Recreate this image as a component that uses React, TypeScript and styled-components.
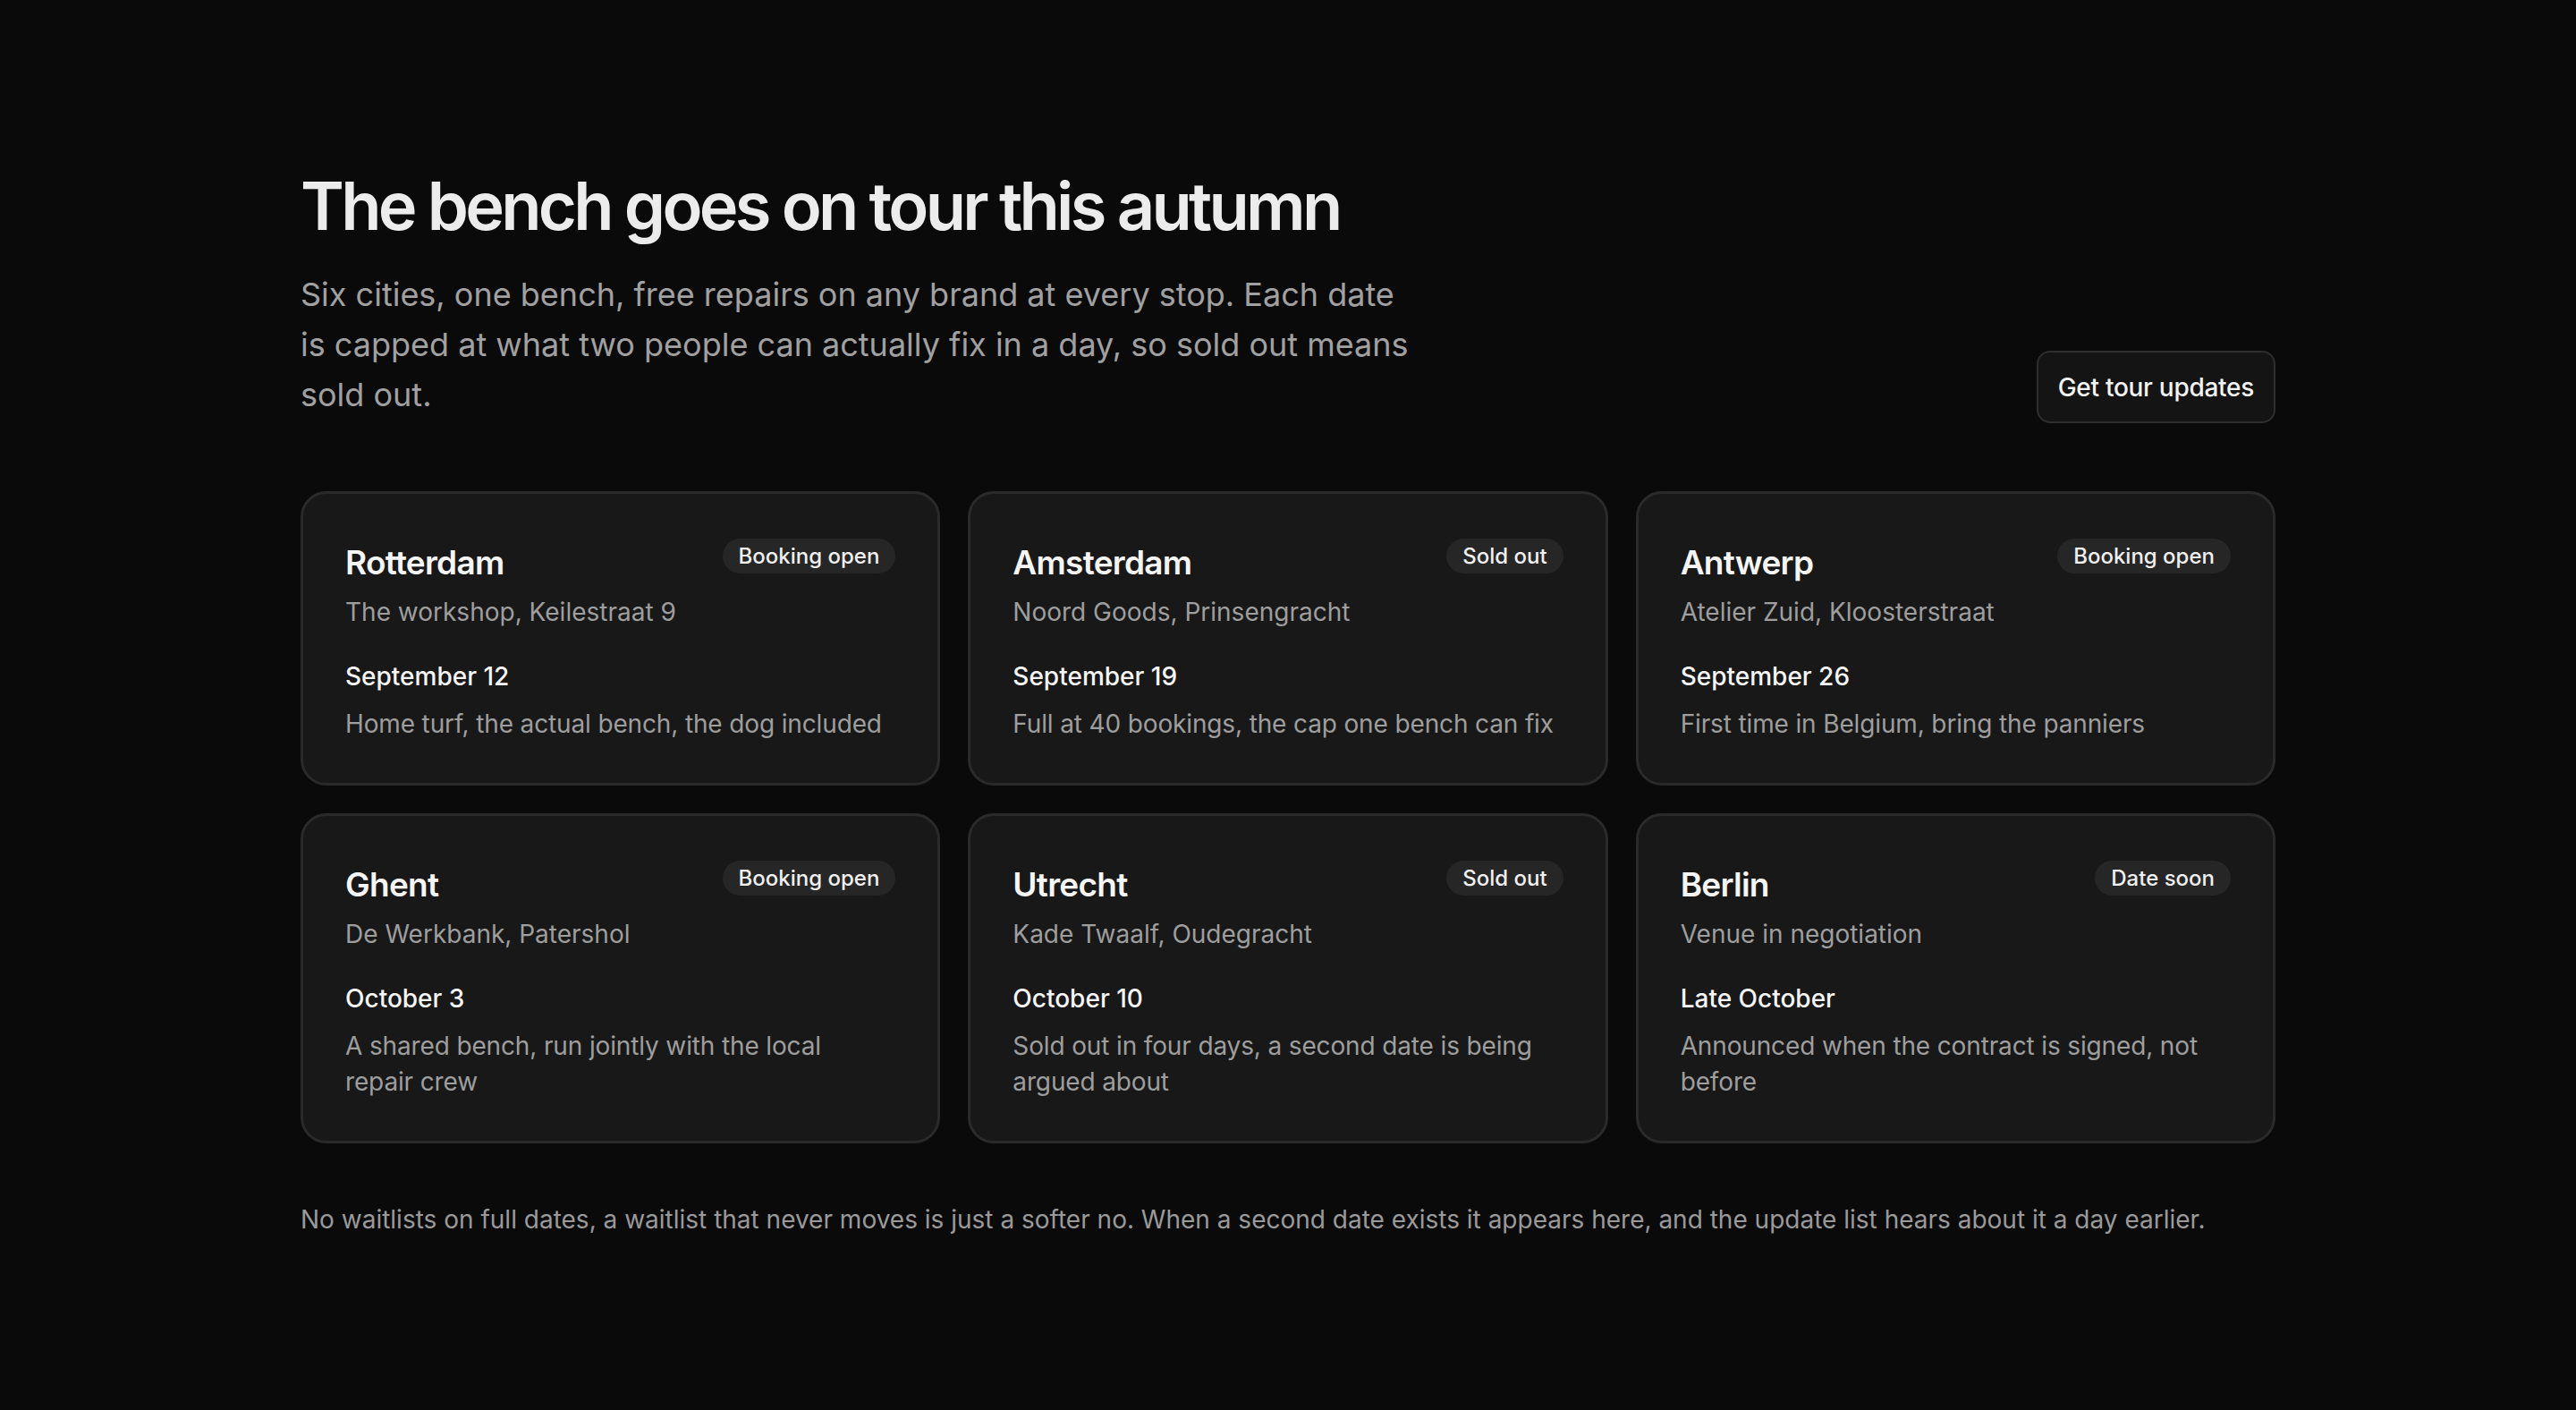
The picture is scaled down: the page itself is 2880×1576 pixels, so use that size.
import React from "react";
import styled, { createGlobalStyle } from "styled-components";

const Global = createGlobalStyle`
  html, body { margin: 0; background: #0a0a0a; }
  body { font-family: Inter, "Noto Sans", sans-serif; color: #ededed; }
`;

const Page = styled.div`
  padding: 186px 336px 120px;
  min-height: 1576px;
  box-sizing: border-box;
`;
const Header = styled.div`
  display: flex;
  justify-content: space-between;
  align-items: flex-end;
`;
const Title = styled.h1`
  margin: 0;
  font-size: 74px;
  line-height: 88px;
  font-weight: 600;
  letter-spacing: -0.05em;
  color: #ececec;
`;
const Sub = styled.p`
  margin: 27px 0 0;
  max-width: 1260px;
  font-size: 36px;
  line-height: 56px;
  color: #a1a1a1;
`;
const Button = styled.button`
  font-family: inherit;
  height: 81px;
  padding: 0 22px;
  margin-bottom: -4px;
  background: #141414;
  border: 2px solid #2e2e2e;
  border-radius: 15px;
  color: #f2f2f2;
  font-size: 28px;
  font-weight: 500;
  letter-spacing: -0.01em;
`;
const Grid = styled.div`
  margin-top: 80px;
  display: grid;
  grid-template-columns: repeat(3, 1fr);
  gap: 31px;
`;
const Card = styled.div`
  background: #181818;
  border: 3px solid #2a2a2a;
  border-radius: 29px;
  padding: 50px 47px 46px;
  display: flex;
  flex-direction: column;
`;
const Top = styled.div`
  display: flex;
  justify-content: space-between;
  align-items: flex-start;
`;
const City = styled.div`
  font-size: 37px;
  line-height: 48px;
  font-weight: 600;
  letter-spacing: -0.02em;
  color: #f5f5f5;
  margin-top: 3px;
`;
const Badge = styled.span`
  background: #262626;
  border-radius: 999px;
  padding: 0 18px;
  height: 39px;
  line-height: 39px;
  font-size: 24px;
  font-weight: 500;
  color: #f0f0f0;
`;
const Venue = styled.div`
  margin-top: 11px;
  font-size: 28px;
  line-height: 40px;
  color: #9e9e9e;
`;
const When = styled.div`
  margin-top: 32px;
  font-size: 28px;
  line-height: 40px;
  font-weight: 500;
  color: #f5f5f5;
`;
const Desc = styled.div`
  margin-top: 13px;
  font-size: 28px;
  line-height: 40px;
  letter-spacing: -0.005em;
  color: #9e9e9e;
`;
const Foot = styled.p`
  margin: 65px 0 0;
  font-size: 28px;
  line-height: 40px;
  color: #9a9a9a;
`;

const stops = [
  ["Rotterdam", "Booking open", "The workshop, Keilestraat 9", "September 12", "Home turf, the actual bench, the dog included"],
  ["Amsterdam", "Sold out", "Noord Goods, Prinsengracht", "September 19", "Full at 40 bookings, the cap one bench can fix"],
  ["Antwerp", "Booking open", "Atelier Zuid, Kloosterstraat", "September 26", "First time in Belgium, bring the panniers"],
  ["Ghent", "Booking open", "De Werkbank, Patershol", "October 3", "A shared bench, run jointly with the local repair crew"],
  ["Utrecht", "Sold out", "Kade Twaalf, Oudegracht", "October 10", "Sold out in four days, a second date is being argued about"],
  ["Berlin", "Date soon", "Venue in negotiation", "Late October", "Announced when the contract is signed, not before"],
];

export default function App() {
  return (
    <Page>
      <Global />
      <Header>
        <div>
          <Title>The bench goes on tour this autumn</Title>
          <Sub>
            Six cities, one bench, free repairs on any brand at every stop. Each date is capped at what two people can
            actually fix in a day, so sold out means sold out.
          </Sub>
        </div>
        <Button>Get tour updates</Button>
      </Header>
      <Grid>
        {stops.map(([c, b, v, d, t]) => (
          <Card key={c}>
            <Top>
              <City>{c}</City>
              <Badge>{b}</Badge>
            </Top>
            <Venue>{v}</Venue>
            <When>{d}</When>
            <Desc>{t}</Desc>
          </Card>
        ))}
      </Grid>
      <Foot>
        No waitlists on full dates, a waitlist that never moves is just a softer no. When a second date exists it appears
        here, and the update list hears about it a day earlier.
      </Foot>
    </Page>
  );
}
